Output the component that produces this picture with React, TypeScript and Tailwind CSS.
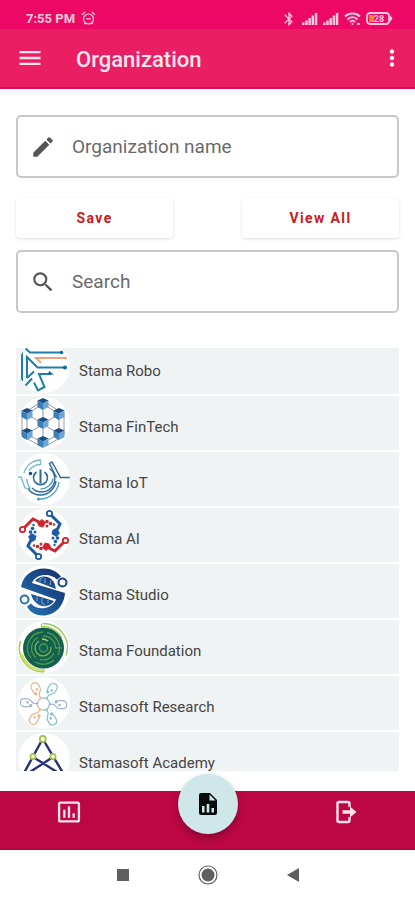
import type { ComponentType } from "react";
import { MdBluetooth, MdEdit, MdInsertChartOutlined, MdMenu, MdMoreVert, MdSearch } from "react-icons/md";

const logoClass = "block size-[52px] shrink-0 rounded-full bg-white";

function RoboLogo() {
  return (
    <svg viewBox="0 0 52 52" className={logoClass} fill="none" stroke="#1c7fa8" strokeWidth="2" aria-hidden="true">
      <path d="M4 10V40" />
      <path d="M7 7l5 4.500h31" />
      <path d="M9 37V16l10.500 10.500h27M9 37l7-6.500M7 45l7-7.500" />
      <path d="M33 33H21l5.500 13-6.500 3.500-4-8" />
      <path d="M48 17H18l5 5" stroke="#e8a67c" />
      <g fill="#14669a" stroke="none">
        <circle cx="43.500" cy="11.500" r="1.800" />
        <circle cx="47" cy="26.500" r="2" />
        <path d="M31 30l5 3.500h-6z" />
        <circle cx="47.500" cy="17" r="1.500" fill="#e8a67c" />
      </g>
    </svg>
  );
}

function Cube({ x, y }: { x: number; y: number }) {
  return (
    <g transform={`translate(${x} ${y})`}>
      <path d="M0-6l5.500 2.500L0-.5l-5.500-3z" fill="#1c4f80" />
      <path d="M-5.500-3.500L0-.5V6l-5.500-3z" fill="#3b7fb8" />
      <path d="M5.500-3.500L0-.5V6l5.500-3z" fill="#6da5d4" />
    </g>
  );
}

function FinTechLogo() {
  const cubes = [[25, 7], [9, 17], [41, 17], [25, 26], [9, 37], [41, 37], [25, 45]];
  return (
    <svg viewBox="0 0 52 52" className={logoClass} aria-hidden="true">
      <path
        d="M25 7L9 17v20l16 9 16-9V17zM25 7v39M9 17l32 20M41 17L9 37M4 16v22M46 16v22M9 14l14-9M27 5l14 9M8 41l14 8M28 49l14-8"
        fill="none"
        stroke="#8a8d93"
        strokeWidth="0.9"
      />
      {cubes.map(([x, y]) => (
        <Cube key={`${x}-${y}`} x={x} y={y} />
      ))}
    </svg>
  );
}

function IotLogo() {
  return (
    <svg viewBox="0 0 52 52" className={logoClass} fill="none" strokeWidth="1.400" aria-hidden="true">
      <g stroke="#2a6b9c">
        <path d="M22.500 16.500v14" strokeWidth="2" />
        <path d="M18.500 19a7 7 0 1 0 8 0" strokeWidth="1.600" />
        <path d="M52 24.500H42.500L34 9l-2.500 1.500 7 14" />
        <path d="M31.500 15.500a13 13 0 0 1-8 23.500c-4 0-7-1.500-9.500-4" />
        <path d="M35 25.500a12.500 12.500 0 0 1-12.500 10.500" stroke="#4fa3bf" />
        <path d="M38 28a16 16 0 0 1-15.500 14c-5 0-9-2-12-5.500l1.500-2" />
        <path d="M41 29a19 19 0 0 1-20 17" stroke="#4fa3bf" />
      </g>
      <g stroke="#74bfc9">
        <path d="M6 20A17.500 17.500 0 0 1 22.500 7v4.500A13.500 13.500 0 0 0 11 18" />
        <path d="M9 26a13.500 13.500 0 0 0 3 9" />
        <path d="M0 24h3l4 11 4 1" />
      </g>
      <circle cx="12.500" cy="20.500" r="1.800" fill="#164f85" />
      <circle cx="20.500" cy="46" r="1.600" fill="#4fa3bf" />
    </svg>
  );
}

function AiLogo() {
  const arms = [
    { angle: 0, color: "#d0242e" },
    { angle: 90, color: "#1c5ca6" },
    { angle: 180, color: "#d0242e" },
    { angle: 270, color: "#1c5ca6" },
  ];
  return (
    <svg viewBox="0 0 52 52" className={logoClass} aria-hidden="true">
      {arms.map(({ angle, color }) => (
        <g key={angle} transform={`rotate(${angle} 26 26)`} fill={color}>
          <circle cx="4.500" cy="20.500" r="2.700" fill="none" stroke={color} strokeWidth="1.800" />
          <path d="M6.500 18.500l8.500-8.500 9 4.500" fill="none" stroke={color} strokeWidth="3" />
          <path d="M19 14l5-4 4 3.500-3 5-4-1z" />
          <circle cx="29" cy="12.500" r="1.800" />
          <circle cx="29" cy="17" r="1.500" />
          <circle cx="32.500" cy="14.500" r="1.800" />
          <circle cx="36" cy="15.500" r="1.200" />
        </g>
      ))}
    </svg>
  );
}

function StudioLogo() {
  return (
    <svg viewBox="0 0 52 52" className={logoClass} aria-hidden="true">
      <defs>
        <linearGradient id="studio-fill" x1="0" y1="1" x2="1" y2="0">
          <stop offset="0" stopColor="#2378b8" />
          <stop offset="1" stopColor="#172c68" />
        </linearGradient>
      </defs>
      <g fill="url(#studio-fill)">
        <path d="M3 22C5 10 15 3.500 26 3.500c7 0 13 3 17 8l-4 3C33 8 18 8 14 18l33 10c-1 13-10 22.500-22 22.500-7 0-13-3-16-9l4-3c5 7 20 7 25-4z" />
        <path d="M17 16c5-7 17-6 20 4l1 4z" />
        <path d="M13 29l23 7c-6 9-20 6-23-7z" />
      </g>
      <g fill="none" stroke="#8fb4d9" strokeWidth="0.900">
        <path d="M22 17v-3l3-2M27 18v-5M32 20l1-5M19 31v5M24 33v5l3 2M30 35v3" />
      </g>
      <g fill="#fff" stroke="#1d4583" strokeWidth="2">
        <circle cx="44.500" cy="17.500" r="4" />
        <circle cx="6.500" cy="34.500" r="4" stroke="#2373b2" />
      </g>
    </svg>
  );
}

function FoundationLogo() {
  return (
    <svg viewBox="0 0 52 52" className={logoClass} fill="none" aria-hidden="true">
      <circle cx="25.500" cy="27" r="20.500" fill="#14604f" />
      <g stroke="#4b9a50" strokeWidth="1.300">
        <path d="M25 11a16 16 0 0 0-12 26M29 11.500A16 16 0 0 1 40 34M17 41a16 16 0 0 0 19-2" />
        <path d="M20 16.500a12 12 0 0 0-2 20M25 15a12 12 0 0 1 12.500 12H44M22 38.500A12 12 0 0 0 36 32" />
        <path d="M21 20a8 8 0 1 0 12 6" stroke="#7fb648" />
        <circle cx="25.500" cy="27" r="4" />
        <path d="M24 18a9 9 0 0 1 6 2" stroke="#b6d34a" />
      </g>
      <path d="M25 2.500a24 24 0 0 1 23 32" stroke="#8fcc5c" strokeWidth="1.300" />
      <path d="M23.500 2.500v3A22 22 0 0 1 44 17" stroke="#a3d04f" strokeWidth="1.300" />
      <path d="M2.500 20a24 24 0 0 0 23.500 31" stroke="#a8d048" strokeWidth="1.600" />
      <path d="M4 33a22 22 0 0 0 22 16v2" stroke="#c5da3b" strokeWidth="1.400" />
    </svg>
  );
}

function ResearchLogo() {
  const petals = [
    { angle: 30, color: "#8cc7c9" },
    { angle: 92, color: "#a3b2cc" },
    { angle: 152, color: "#7fc4bd" },
    { angle: 212, color: "#ecb28e" },
    { angle: 274, color: "#a3b2cc" },
    { angle: 334, color: "#ecb28e" },
  ];
  return (
    <svg viewBox="0 0 52 52" className={logoClass} fill="none" aria-hidden="true">
      {petals.map(({ angle, color }) => (
        <g key={angle} transform={`rotate(${angle} 25.500 27)`} stroke={color} strokeWidth="1.200">
          <path d="M22.500 14.500l-1-3V7.500c0-5 8-5 8 0V12l-4 5v5" />
          <path d="M22.500 22l3-2 3 2" />
          <circle cx="23" cy="14.500" r="1" fill={color} />
          <circle cx="26" cy="11" r="0.700" fill={color} />
        </g>
      ))}
    </svg>
  );
}

function AcademyLogo() {
  return (
    <svg viewBox="0 0 52 52" className={logoClass} fill="none" aria-hidden="true">
      <path d="M23.500 8L6 40M26 8l19 32M15 24l24 15M35 24L12 39" stroke="#26307e" strokeWidth="2.400" />
      <g fill="#fff" stroke="#9fc546" strokeWidth="1.800">
        <circle cx="24.800" cy="6" r="3" />
        <circle cx="15" cy="23.500" r="2.600" />
        <circle cx="35" cy="23.500" r="2.600" />
      </g>
    </svg>
  );
}

const organizations: { name: string; Logo: ComponentType }[] = [
  { name: "Stama Robo", Logo: RoboLogo },
  { name: "Stama FinTech", Logo: FinTechLogo },
  { name: "Stama IoT", Logo: IotLogo },
  { name: "Stama AI", Logo: AiLogo },
  { name: "Stama Studio", Logo: StudioLogo },
  { name: "Stama Foundation", Logo: FoundationLogo },
  { name: "Stamasoft Research", Logo: ResearchLogo },
  { name: "Stamasoft Academy", Logo: AcademyLogo },
];

function SignalIcon() {
  return (
    <svg viewBox="0 0 16 12" className="h-3 w-4" fill="currentColor" aria-hidden="true">
      <path d="M0 9.500h2.500V12H0zM3.200 7.500h2.500V12H3.200zM6.400 5h2.500v7H6.400zM9.600 2.500h2.500V12H9.600zM12.800 0h2.500v12h-2.500z" />
    </svg>
  );
}

function StatusBar() {
  return (
    <div className="flex h-[29px] items-center justify-between bg-[#ee0865] pt-2 pr-[22px] pl-[26px] text-[#ffc9dc]">
      <div className="flex items-center gap-[6px]">
        <span className="text-[13px] leading-4 font-bold">7:55 PM</span>
        <svg viewBox="0 0 16 16" className="size-[15px]" fill="none" stroke="currentColor" strokeWidth="1.300" aria-hidden="true">
          <circle cx="8" cy="8.500" r="5.300" />
          <path d="M1 4l3.500-3M15 4l-3.500-3M5.500 8.500h5M3.500 14l1.200-1.500M12.500 14l-1.200-1.500" />
        </svg>
      </div>
      <div className="flex items-center gap-[5px]">
        <MdBluetooth className="size-4" aria-hidden="true" />
        <SignalIcon />
        <SignalIcon />
        <svg viewBox="0 0 17 14" className="h-[14px] w-[17px]" fill="none" stroke="currentColor" strokeWidth="2" aria-hidden="true">
          <path d="M1 4.500c4-4 11-4 15 0M3.500 7.500c3-3 7-3 10 0M6 10c1.500-1.500 3.500-1.500 5 0" />
          <circle cx="8.500" cy="12" r="1" fill="currentColor" stroke="none" />
          <path d="M13 12h3" />
        </svg>
        <svg viewBox="0 0 27 13" className="h-[13px] w-[27px]" aria-hidden="true">
          <rect x="1" y="1" width="22" height="11" rx="3" fill="none" stroke="currentColor" strokeWidth="1.800" />
          <path d="M24 3l2.500 3.500L24 10z" fill="currentColor" />
          <path d="M3 3h5v7H3z" fill="#ff8a1e" />
          <text x="13" y="10" textAnchor="middle" fontSize="9" fontWeight="700" fill="currentColor">
            28
          </text>
        </svg>
      </div>
    </div>
  );
}

const actionClass =
  "h-10 w-[41%] rounded-sm bg-white text-sm font-bold tracking-widest text-[#cb1a1a] shadow-[0_1px_3px_rgba(0,0,0,0.14)]";
const fieldClass = "flex h-[63px] items-center rounded-[5px] border-2 border-[#c8c8c8] pl-3 text-[#555]";
const inputClass = "ml-4 min-w-0 flex-1 bg-transparent text-[19px] leading-6 text-[#6a6a6a] outline-none placeholder:text-[#6a6a6a]";

export default function App() {
  return (
    <div className="flex h-dvh flex-col overflow-hidden bg-white font-['Roboto','Noto_Sans',sans-serif]">
      <StatusBar />
      <header className="flex h-[60px] items-center border-b-2 border-[#df0d55] bg-[#e91e63] pr-[10px] pl-4 text-[#ffe6ef]">
        <button type="button" aria-label="Menu">
          <MdMenu className="size-7" />
        </button>
        <h1 className="ml-8 flex-1 pt-1 text-[22px] leading-7 font-medium">Organization</h1>
        <button type="button" aria-label="More options">
          <MdMoreVert className="size-[26px] text-white" />
        </button>
      </header>

      <main className="flex min-h-0 flex-1 flex-col px-4 pt-[26px] pb-5">
        <label className={fieldClass}>
          <MdEdit className="size-[26px]" aria-hidden="true" />
          <input type="text" aria-label="Organization name" placeholder="Organization name" className={inputClass} />
        </label>
        <div className="mt-5 mb-3 flex justify-between">
          <button type="button" className={actionClass}>Save</button>
          <button type="button" className={actionClass}>View All</button>
        </div>
        <label className={fieldClass}>
          <MdSearch className="size-[26px]" aria-hidden="true" />
          <input type="text" aria-label="Search" placeholder="Search" className={inputClass} />
        </label>

        <div className="mt-[35px] flex min-h-0 flex-1 flex-col overflow-hidden">
          <ul className="-mt-2 flex flex-col gap-[2px]">
            {organizations.map(({ name, Logo }) => (
              <li key={name} className="flex h-[54px] shrink-0 items-center bg-[#f0f3f3] pl-[2px]">
                <Logo />
                <span className="pt-[7px] pl-[9px] text-[15px] leading-5 text-[#444]">{name}</span>
              </li>
            ))}
          </ul>
        </div>
      </main>

      <nav className="relative grid h-[59px] grid-cols-3 justify-items-center border-b border-[#a5003a] bg-[#bc0744] text-[#ffe3ec]">
        <button type="button" aria-label="Statistics" className="mt-[7px] h-7">
          <MdInsertChartOutlined className="size-7" />
        </button>
        <button
          type="button"
          aria-label="Reports"
          className="absolute -top-[17px] left-1/2 flex size-[60px] -translate-x-1/2 items-center justify-center rounded-full bg-[#cfe7e9] shadow-[0_4px_7px_rgba(0,0,0,0.28)]"
        >
          <svg viewBox="0 0 18 22" className="h-[22px] w-[18px]" aria-hidden="true">
            <path d="M2 0h9l7 7v13a2 2 0 0 1-2 2H2a2 2 0 0 1-2-2V2a2 2 0 0 1 2-2z" fill="#080c0d" />
            <path d="M10.500 1.500V7.500h6zM3 13h2.500v6.500H3zM7.700 11h2.600v8.500H7.700zM12.500 15H15v4.500h-2.500z" fill="#cfe7e9" />
          </svg>
        </button>
        <button type="button" aria-label="Log out" className="col-start-3 mt-[7px] h-7">
          <svg viewBox="0 0 28 28" className="size-7" fill="none" stroke="currentColor" strokeWidth="2.400" aria-hidden="true">
            <path d="M17.500 9V5.500a1.500 1.500 0 0 0-1.500-1.500H7a1.500 1.500 0 0 0-1.500 1.500v17A1.500 1.500 0 0 0 7 24h9a1.500 1.500 0 0 0 1.500-1.500V19" />
            <path d="M10.500 14h9" strokeWidth="3.500" />
            <path d="M18 8.500l6.500 5.500-6.500 5.500z" fill="currentColor" stroke="none" />
          </svg>
        </button>
      </nav>

      <div className="flex h-[50px] shrink-0 items-center justify-center text-[#5f5f5f]">
        <button type="button" aria-label="Recent apps" className="flex w-[85px] justify-center">
          <span className="size-3 bg-current" />
        </button>
        <button type="button" aria-label="Home" className="flex w-[85px] justify-center">
          <svg viewBox="0 0 20 20" className="size-5" fill="currentColor" aria-hidden="true">
            <circle cx="10" cy="10" r="9" fill="none" stroke="currentColor" strokeWidth="1.200" />
            <circle cx="10" cy="10" r="6.500" />
          </svg>
        </button>
        <button type="button" aria-label="Back" className="flex w-[85px] justify-center">
          <svg viewBox="0 0 12 14" className="h-[14px] w-3" fill="currentColor" aria-hidden="true">
            <path d="M12 0v14L0 7z" />
          </svg>
        </button>
      </div>
    </div>
  );
}
